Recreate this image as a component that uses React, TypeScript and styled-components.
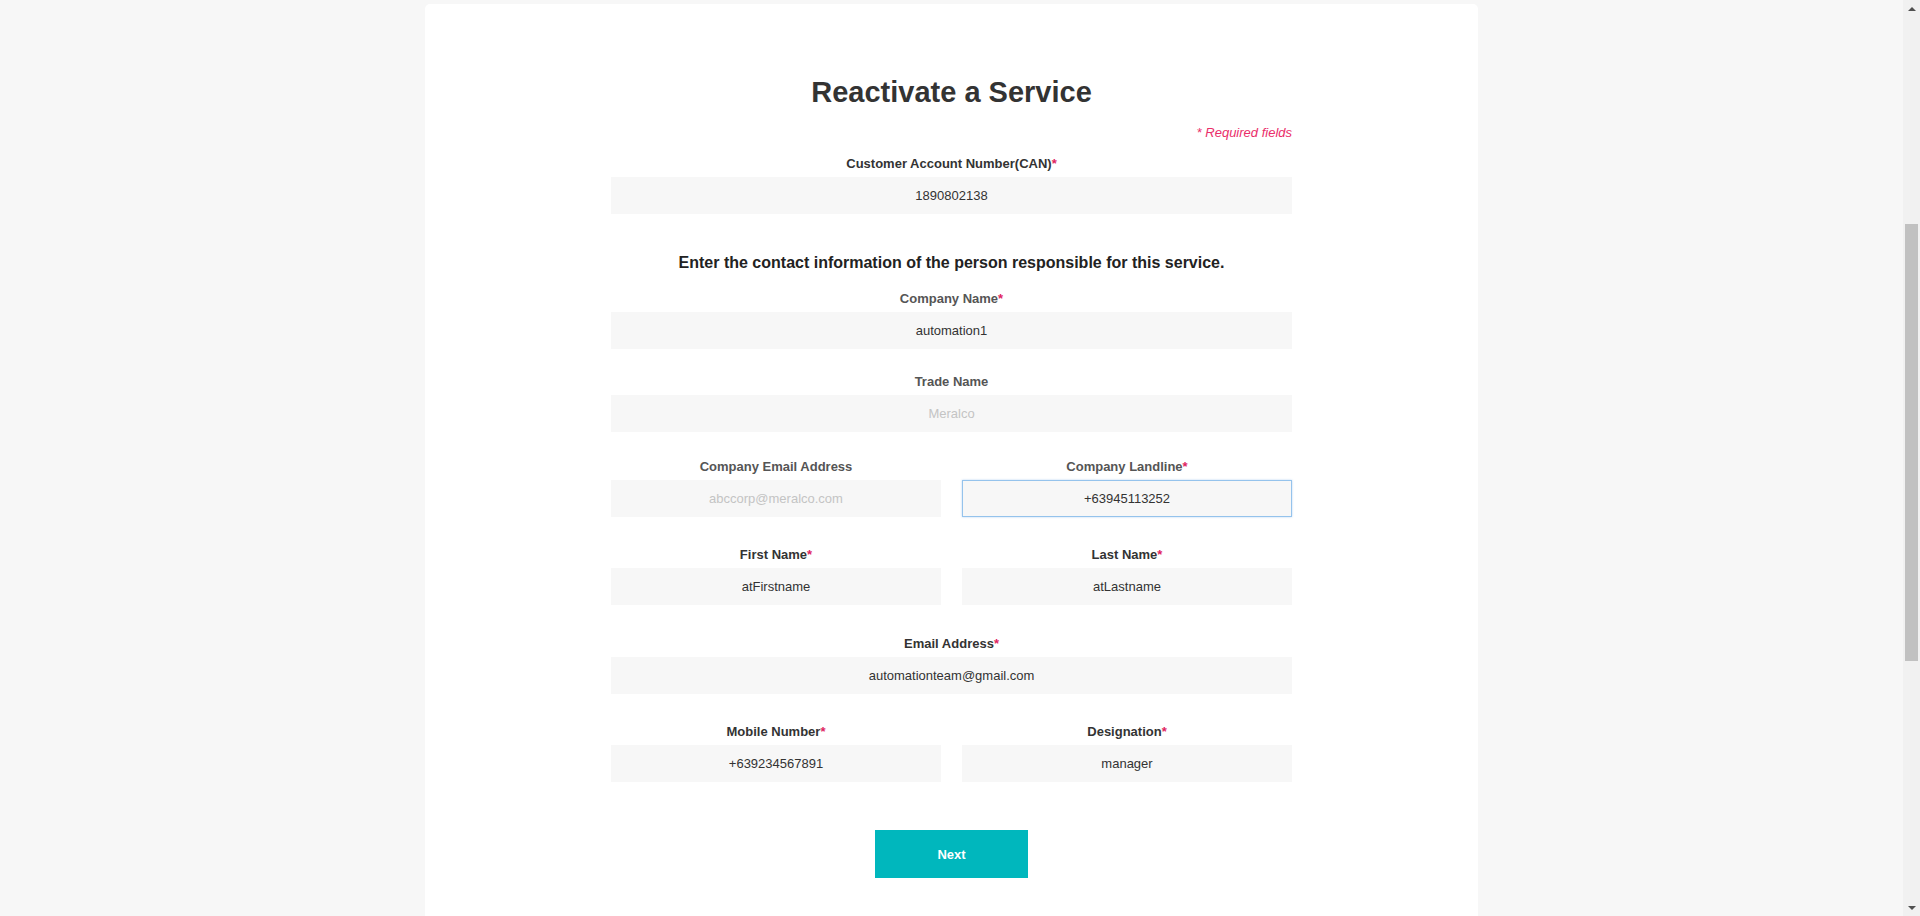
import React from "react";
import styled, { createGlobalStyle, css } from "styled-components";

const GlobalStyle = createGlobalStyle`
  html, body {
    margin: 0;
    padding: 0;
    height: 100%;
    overflow: hidden;
  }
  body {
    font-family: "Liberation Sans", Arial, sans-serif;
    background: #f7f7f7;
  }
  * {
    box-sizing: border-box;
  }
`;

const SPage = styled.div`
  display: flex;
  height: 100vh;
  background: #f7f7f7;
`;

const SMain = styled.div`
  flex: 1;
  overflow: hidden;
  display: flex;
  justify-content: center;
  align-items: flex-start;
`;

const SScrollbar = styled.div`
  width: 17px;
  display: flex;
  flex-direction: column;
  background: #f1f1f1;
`;

const SArrow = styled.div<{ $down?: boolean }>`
  height: 17px;
  display: flex;
  align-items: center;
  justify-content: center;

  &::before {
    content: "";
    width: 0;
    height: 0;
    border-left: 4px solid transparent;
    border-right: 4px solid transparent;
    ${(p) =>
      p.$down
        ? css`
            border-top: 4px solid #505050;
          `
        : css`
            border-bottom: 4px solid #505050;
          `}
  }
`;

const STrack = styled.div`
  flex: 1;
  padding: 0 2px;
`;

const SThumb = styled.div`
  height: 437px;
  background: #c1c1c1;
`;

const SCard = styled.div`
  width: 1053px;
  margin-top: 4px;
  background: #ffffff;
  border-radius: 5px;
  padding: 71px 0 76px;
  display: flex;
  flex-direction: column;
  align-items: center;
`;

const STitle = styled.h1`
  margin: 0;
  font-size: 29px;
  line-height: 34px;
  font-weight: 700;
  color: #333333;
`;

const SForm = styled.div`
  width: 681px;
  display: flex;
  flex-direction: column;
`;

const SRequiredNote = styled.div`
  text-align: right;
  font-style: italic;
  font-size: 13px;
  line-height: 15px;
  color: #ea2e6a;
  margin-top: 16px;
  margin-bottom: 15px;
`;

const SSubheading = styled.h2`
  margin: 39px 0 18px;
  text-align: center;
  font-size: 16px;
  line-height: 19px;
  font-weight: 700;
  color: #222222;
`;

const SRow = styled.div<{ $gap: number }>`
  display: grid;
  grid-template-columns: 1fr 1fr;
  column-gap: 21px;
  margin-top: ${(p) => p.$gap}px;
`;

const SField = styled.div<{ $gap: number }>`
  display: flex;
  flex-direction: column;
  margin-top: ${(p) => p.$gap}px;
`;

const smallText = css`
  font-family: "Liberation Sans", Arial, sans-serif;
  font-size: 13px;
`;

const SLabel = styled.label<{ $muted?: boolean }>`
  ${smallText};
  text-align: center;
  line-height: 17px;
  font-weight: 700;
  color: ${(p) => (p.$muted ? "#555555" : "#333333")};
  margin-bottom: 5px;
`;

const SStar = styled.span`
  color: #e0245e;
`;

const SInput = styled.input<{ $focused?: boolean }>`
  ${smallText};
  width: 100%;
  height: 37px;
  border: 1px solid #f7f7f7;
  background: #f7f7f7;
  outline: none;
  text-align: center;
  color: #333333;
  padding: 0 10px;

  &::placeholder {
    color: #c4c4c4;
  }

  ${(p) =>
    p.$focused &&
    css`
      border-color: #95c3ec;
      box-shadow: 0 0 2px rgba(102, 165, 230, 0.45);
    `}
`;

const SNext = styled.button`
  ${smallText};
  align-self: center;
  margin-top: 48px;
  width: 153px;
  height: 48px;
  border: none;
  background: #00b7bd;
  color: #ffffff;
  font-weight: 700;
  cursor: pointer;
`;

interface IField {
  label: string;
  required?: boolean;
  muted?: boolean;
  value?: string;
  placeholder?: string;
  focused?: boolean;
}

const FieldBody: React.FC<IField> = ({
  label,
  required,
  muted,
  value,
  placeholder,
  focused,
}) => (
  <>
    <SLabel $muted={muted}>
      {label}
      {required && <SStar>*</SStar>}
    </SLabel>
    <SInput
      type="text"
      defaultValue={value}
      placeholder={placeholder}
      $focused={focused}
    />
  </>
);

const Field: React.FC<IField & { gap: number }> = ({ gap, ...rest }) => (
  <SField $gap={gap}>
    <FieldBody {...rest} />
  </SField>
);

const FieldPair: React.FC<{ gap: number; left: IField; right: IField }> = ({
  gap,
  left,
  right,
}) => (
  <SRow $gap={gap}>
    <SField $gap={0}>
      <FieldBody {...left} />
    </SField>
    <SField $gap={0}>
      <FieldBody {...right} />
    </SField>
  </SRow>
);

// page is scrolled part way down, so the thumb sits below the top of the track
const scrollOffset = 207;

const App = () => (
  <>
    <GlobalStyle />
    <SPage>
      <SMain>
        <SCard>
          <STitle>Reactivate a Service</STitle>
          <SForm>
            <SRequiredNote>* Required fields</SRequiredNote>
            <Field
              gap={0}
              label="Customer Account Number(CAN)"
              required
              value="1890802138"
            />
            <SSubheading>
              Enter the contact information of the person responsible for this
              service.
            </SSubheading>
            <Field
              gap={0}
              label="Company Name"
              required
              muted
              value="automation1"
            />
            <Field gap={24} label="Trade Name" muted placeholder="Meralco" />
            <FieldPair
              gap={26}
              left={{
                label: "Company Email Address",
                muted: true,
                placeholder: "abccorp@meralco.com",
              }}
              right={{
                label: "Company Landline",
                required: true,
                muted: true,
                value: "+63945113252",
                focused: true,
              }}
            />
            <FieldPair
              gap={29}
              left={{ label: "First Name", required: true, value: "atFirstname" }}
              right={{ label: "Last Name", required: true, value: "atLastname" }}
            />
            <Field
              gap={30}
              label="Email Address"
              required
              value="automationteam@gmail.com"
            />
            <FieldPair
              gap={29}
              left={{
                label: "Mobile Number",
                required: true,
                value: "+639234567891",
              }}
              right={{ label: "Designation", required: true, value: "manager" }}
            />
            <SNext>Next</SNext>
          </SForm>
        </SCard>
      </SMain>
      <SScrollbar>
        <SArrow />
        <STrack style={{ paddingTop: scrollOffset }}>
          <SThumb />
        </STrack>
        <SArrow $down />
      </SScrollbar>
    </SPage>
  </>
);

export default App;
